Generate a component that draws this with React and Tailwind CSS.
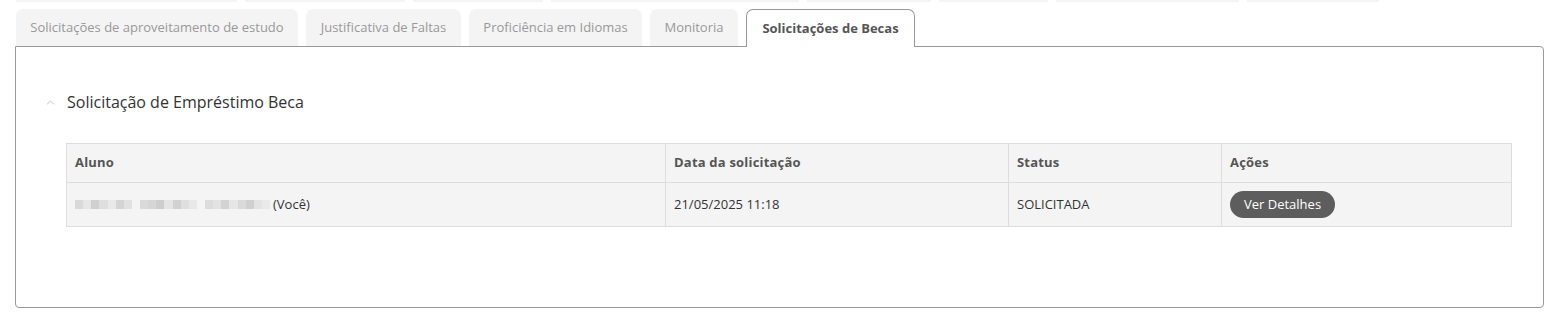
import { ChevronUp } from "lucide-react";

const prevTabs = [221, 160, 130, 248, 124, 109, 183, 132];

const tabs = [
  { label: "Solicitações de aproveitamento de estudo", w: "w-[282px]" },
  { label: "Justificativa de Faltas", w: "w-[155px]" },
  { label: "Proficiência em Idiomas", w: "w-[173px]" },
  { label: "Monitoria", w: "w-[88px]" },
];

// pixelated (anonymised) student name
const blur = [
  "#d9d9d9", "#e6e6e6", "#cfcfcf", "#dedede", "#e9e9e9", "#d4d4d4", "#e1e1e1", "#f4f4f4",
  "#dadada", "#d6d6d6", "#cdcdcd", "#e4e4e4", "#d1d1d1", "#dfdfdf", "#e8e8e8", "#f4f4f4",
  "#dcdcdc", "#e2e2e2", "#d3d3d3", "#e6e6e6", "#dadada", "#d0d0d0", "#e3e3e3", "#e9e9e9",
];

function BlurredName() {
  return (
    <span className="inline-flex items-center mr-[3px] w-[195px]">
      {blur.map((c, i) => (
        <span key={i} className="inline-block h-[9px] flex-1" style={{ backgroundColor: c }} />
      ))}
    </span>
  );
}

export default function App() {
  return (
    <div className="w-[1556px] h-[324px] bg-white text-[13px] text-[#333]" style={{ fontFamily: '"Open Sans", sans-serif' }}>
      {/* previous tab row, cut off */}
      <div className="flex gap-[8px] pl-[16px] h-[2px]">
        {prevTabs.map((w, i) => (
          <div key={i} className="h-[2px] bg-[#f4f4f4]" style={{ width: w }} />
        ))}
      </div>

      <div className="pl-[15px] pr-[12px] pt-[6px]">
        {/* tabs */}
        <div className="flex items-end gap-[8px] pl-[1px] h-[38px]">
          {tabs.map((t) => (
            <div
              key={t.label}
              className={`${t.w} h-[37px] flex items-center justify-center rounded-t-[7px] bg-[#f4f4f4] text-[#999] whitespace-nowrap`}
            >
              {t.label}
            </div>
          ))}
          <div className="relative z-10 -mb-px w-[169px] h-[38px] flex items-center justify-center rounded-t-[7px] border border-b-0 border-[#999] bg-white text-[#555] font-bold whitespace-nowrap">
            Solicitações de Becas
          </div>
        </div>

        {/* panel */}
        <div className="border border-[#999] rounded-b-[4px] rounded-tr-[4px] h-[262px] pt-[42px] pl-[28px] pr-[30px]">
          <div className="flex items-center gap-[10px] h-[26px]">
            <ChevronUp size={13} strokeWidth={1.5} className="text-[#bbb]" />
            <span className="text-[16px] text-[#333]">Solicitação de Empréstimo Beca</span>
          </div>

          <table className="ml-[22px] mt-[28px] w-[1446px] border-collapse bg-[#f4f4f4] text-left">
            <thead>
              <tr className="h-[39px]">
                <th className="w-[599px] border border-[#ddd] px-[8px] font-bold text-[#555] tracking-[0.2px]">Aluno</th>
                <th className="w-[343px] border border-[#ddd] px-[8px] font-bold text-[#555] tracking-[0.2px]">Data da solicitação</th>
                <th className="w-[213px] border border-[#ddd] px-[8px] font-bold text-[#555] tracking-[0.2px]">Status</th>
                <th className="border border-[#ddd] px-[8px] font-bold text-[#555] tracking-[0.2px]">Ações</th>
              </tr>
            </thead>
            <tbody>
              <tr className="h-[44px]">
                <td className="border border-[#ddd] px-[8px]">
                  <span className="inline-flex items-center">
                    <BlurredName />
                    (Você)
                  </span>
                </td>
                <td className="border border-[#ddd] px-[8px]">21/05/2025 11:18</td>
                <td className="border border-[#ddd] px-[8px]">SOLICITADA</td>
                <td className="border border-[#ddd] px-[8px]">
                  <button className="h-[27px] px-[14px] rounded-full bg-[#5d5d5d] text-white text-[13px]">
                    Ver Detalhes
                  </button>
                </td>
              </tr>
            </tbody>
          </table>
        </div>
      </div>
    </div>
  );
}
